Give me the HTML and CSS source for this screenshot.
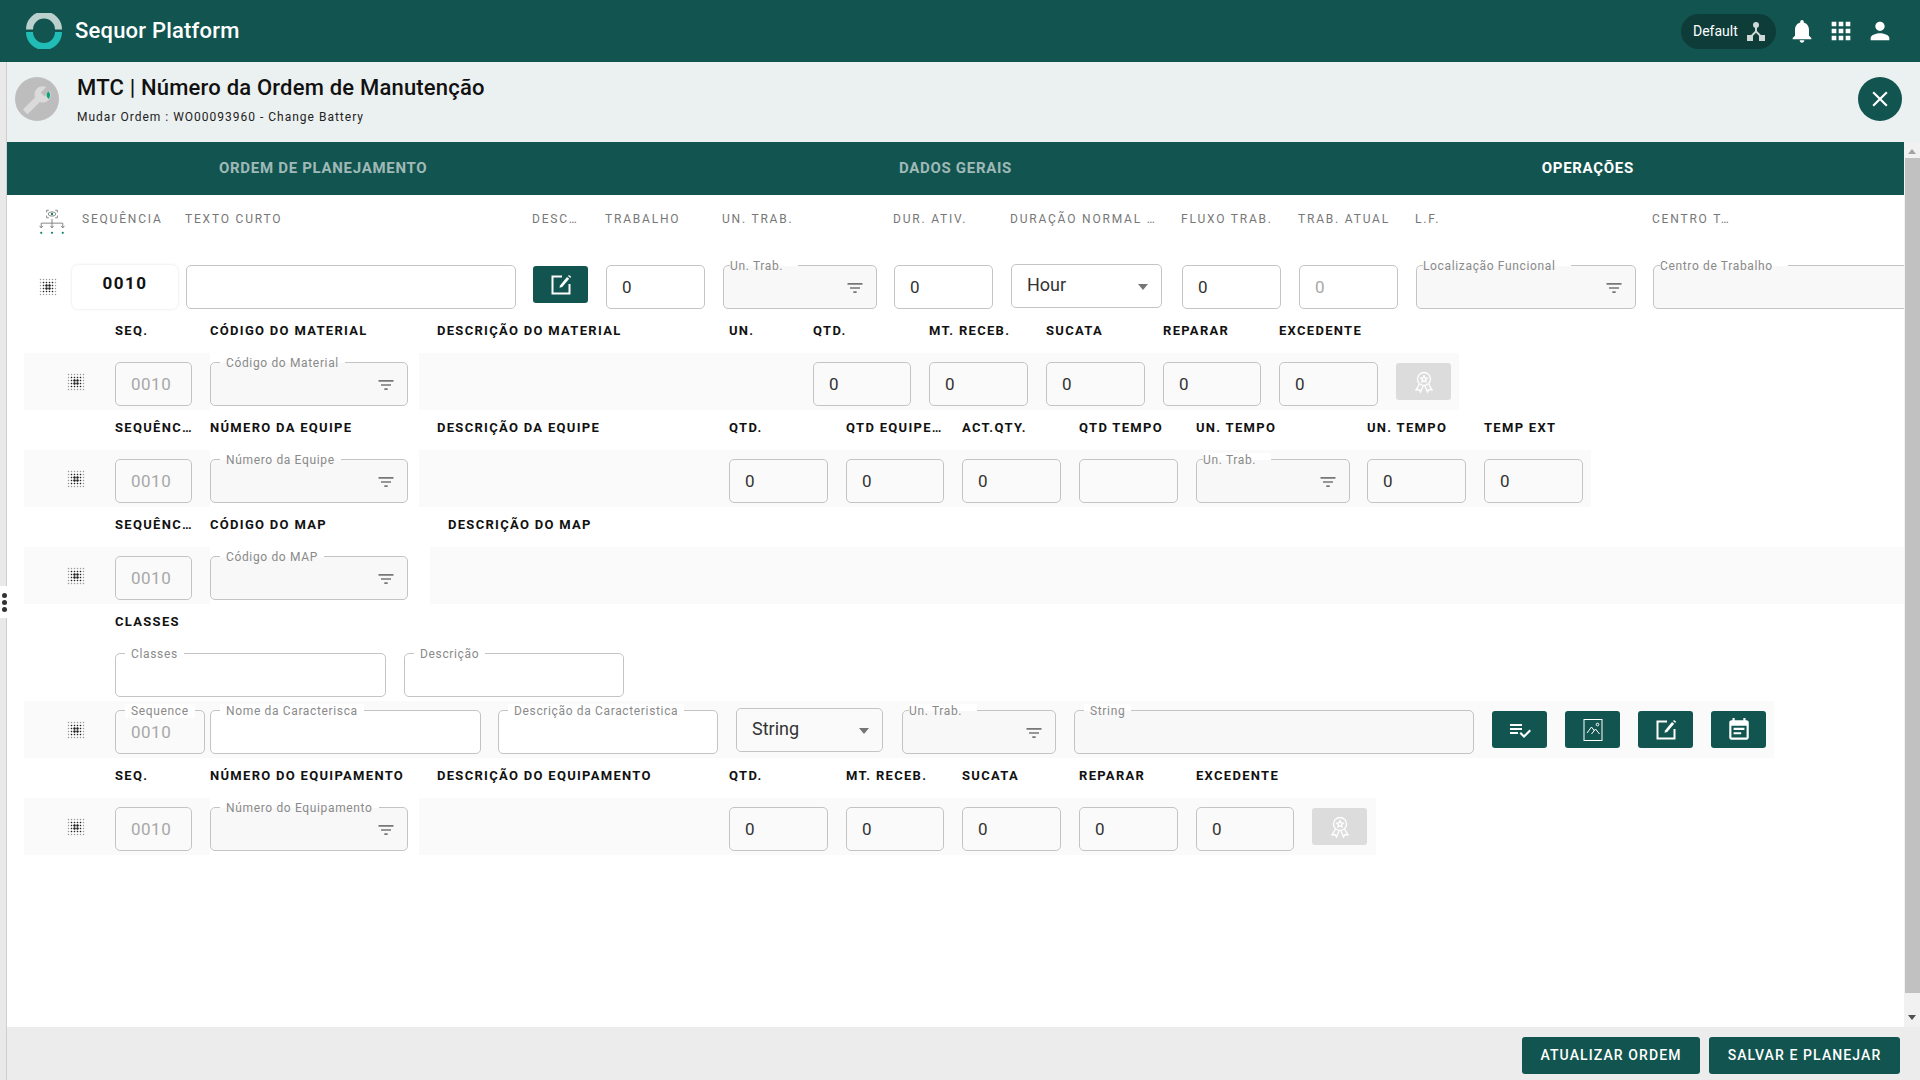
FILE: index.html
```html
<!DOCTYPE html>
<html lang="pt-BR">
<head>
    <meta charset="UTF-8">
    <meta name="viewport" content="width=device-width, initial-scale=1.0">
    <title>Sequor Platform</title>
    <link rel="stylesheet" href="styles.css">
</head>
<body>
    <svg class="sprites" width="0" height="0">
        <defs>
            <pattern id="dot-pattern" width="3" height="3" patternUnits="userSpaceOnUse"><circle cx="1.5" cy="1.5" r="0.75" fill="currentColor"/></pattern>
            <pattern id="dot-pattern-big" width="3" height="3" patternUnits="userSpaceOnUse"><circle cx="1.5" cy="1.5" r="1.200" fill="currentColor"/></pattern>
            <symbol id="i-filter" viewBox="0 0 24 24"><path d="M10 18h4v-2h-4v2zM3 6v2h18V6H3zm3 7h12v-2H6v2z"/></symbol>
            <symbol id="i-drag" viewBox="0 0 18 18">
                <rect width="18" height="18" fill="url(#dot-pattern)" opacity=".45"/>
                <rect x="3" y="3" width="12" height="12" fill="url(#dot-pattern)"/>
                <rect x="6" y="6" width="6" height="6" fill="url(#dot-pattern-big)"/>
            </symbol>
            <symbol id="i-edit" viewBox="0 0 24 24">
                <path d="M13 3.500H3.500v17h17V11" fill="none" stroke="currentColor" stroke-width="2"/>
                <path d="M11 12.500l7-8.500 2.200 1.800-7 8.200-2.700.8z" fill="currentColor"/>
                <path d="M19 3l1-1 2.200 1.800-1 1.200z" fill="currentColor"/>
            </symbol>
            <symbol id="i-award" viewBox="0 0 24 24" fill="none" stroke="currentColor" stroke-width="1.300">
                <circle cx="12" cy="9" r="6.500"/>
                <path d="M12 5.800l1 2.100 2.200.3-1.600 1.500.4 2.200-2-1.100-2 1.100.4-2.200-1.600-1.500 2.200-.3z"/>
                <path d="M7.500 14l-3.500 6 3-.5 1.500 2.500 2.500-6M16.500 14l3.500 6-3-.5-1.500 2.500-2.500-6"/>
            </symbol>
        </defs>
    </svg>

    <header class="topbar">
        <svg class="logo" width="36" height="36" viewBox="0 0 36 36" fill="none" stroke-width="7">
            <path d="M3.500 16.500A14.500 14.500 0 0 1 32.500 16.500" stroke="#b9d0cd"/>
            <path d="M3.500 19A14.500 14.500 0 0 0 32.500 19" stroke="#20bdb7"/>
        </svg>
        <span class="brand">Sequor Platform</span>
        <div class="topbar-right">
            <div class="env-pill">
                <span>Default</span>
                <svg width="20" height="20" viewBox="0 0 20 20" fill="#cfd8d7">
                    <circle cx="10" cy="4" r="3"/>
                    <path d="M9 5h2v5l5 5-1.400 1.400L10 11.800l-4.600 4.600L4 15l5-5z"/>
                    <rect x="1" y="14" width="6" height="6"/>
                    <rect x="13" y="14" width="6" height="6"/>
                </svg>
            </div>
            <svg class="top-icon" viewBox="0 0 24 24"><path d="M12 22c1.100 0 2-.9 2-2h-4c0 1.100.9 2 2 2zm6-6v-5c0-3.070-1.640-5.640-4.500-6.320V4c0-.83-.67-1.500-1.500-1.500s-1.500.67-1.500 1.500v.68C7.630 5.360 6 7.920 6 11v5l-2 2v1h16v-1l-2-2z"/></svg>
            <svg class="top-icon" viewBox="0 0 24 24"><path d="M4 8h4V4H4v4zm6 12h4v-4h-4v4zm-6 0h4v-4H4v4zm0-6h4v-4H4v4zm6 0h4v-4h-4v4zm6-10v4h4V4h-4zm-6 4h4V4h-4v4zm6 6h4v-4h-4v4zm0 6h4v-4h-4v4z"/></svg>
            <svg class="top-icon" viewBox="0 0 24 24"><path d="M12 12c2.210 0 4-1.790 4-4s-1.790-4-4-4-4 1.790-4 4 1.790 4 4 4zm0 2c-2.670 0-8 1.340-8 4v2h16v-2c0-2.660-5.330-4-8-4z"/></svg>
        </div>
    </header>

    <div class="shell">
        <aside class="rail">
            <div class="rail-handle"><i></i><i></i><i></i></div>
        </aside>

        <main class="page">
            <section class="titlebar">
                <div class="avatar">
                    <svg width="44" height="44" viewBox="0 0 44 44">
                        <path transform="translate(37 8) scale(-1.250 1.250)" fill="#dadada" d="M22.700 19l-9.100-9.100c.9-2.300.4-5-1.500-6.900-2-2-5-2.400-7.400-1.300L9 6 6 9 1.600 4.700C.4 7.100.9 10.100 2.900 12.100c1.900 1.900 4.600 2.400 6.900 1.500l9.100 9.100c.4.4 1 .4 1.400 0l2.300-2.300c.5-.4.500-1.100.1-1.400z"/>
                        <path d="M33.500 14.500c2 1.800 2.200 4.500.3 7.500-2.300-1.500-3.400-4.500-.3-7.500z" fill="#10a37f"/>
                    </svg>
                </div>
                <div class="title-text">
                    <h1>MTC | Número da Ordem de Manutenção</h1>
                    <p>Mudar Ordem : WO00093960 - Change Battery</p>
                </div>
                <button class="close-btn">
                    <svg width="26" height="26" viewBox="0 0 24 24" fill="#fff"><path d="M19 6.410L17.590 5 12 10.590 6.410 5 5 6.410 10.590 12 5 17.590 6.410 19 12 13.410 17.590 19 19 17.590 13.410 12z"/></svg>
                </button>
            </section>

            <div class="work">
                <div class="panel">
                    <nav class="tabs">
                        <div class="tab">ORDEM DE PLANEJAMENTO</div>
                        <div class="tab">DADOS GERAIS</div>
                        <div class="tab active">OPERAÇÕES</div>
                    </nav>

                    <!-- operacao -->
                    <div class="block ops">
                        <div class="op-head op-tree">
                            <svg width="28" height="28" viewBox="0 0 26 26" fill="none" stroke="#777" stroke-width=".8">
                                <path d="M8 5V3h2M16 3h2v2M18 8v2h-2M10 10H8V8"/>
                                <ellipse cx="13" cy="6.500" rx="3.500" ry="2"/>
                                <circle cx="13" cy="6.500" r="1.100" fill="#14806f" stroke="none"/>
                                <path d="M13 11v8M3 19v-4h20v4M1.500 17.500L3 19.500l1.500-2M11.500 17.500l1.500 2 1.500-2M21.500 17.500l1.500 2 1.500-2"/>
                                <circle cx="3" cy="24" r="1" fill="#14806f" stroke="none"/>
                                <circle cx="13" cy="24" r="1" fill="#14806f" stroke="none"/>
                                <circle cx="23" cy="24" r="1" fill="#14806f" stroke="none"/>
                            </svg>
                        </div>
                        <div class="op-head">SEQUÊNCIA</div>
                        <div class="op-head flush">TEXTO CURTO</div>
                        <div class="op-head flush">DESC…</div>
                        <div class="op-head flush">TRABALHO</div>
                        <div class="op-head flush">UN. TRAB.</div>
                        <div class="op-head flush">DUR. ATIV.</div>
                        <div class="op-head flush">DURAÇÃO NORMAL …</div>
                        <div class="op-head flush">FLUXO TRAB.</div>
                        <div class="op-head flush">TRAB. ATUAL</div>
                        <div class="op-head flush">L.F.</div>
                        <div class="op-head flush">CENTRO T…</div>

                        <div class="op-cell"><svg class="drag drag-op"><use href="#i-drag"/></svg></div>
                        <div class="op-cell"><div class="seq-badge">0010</div></div>
                        <div class="op-cell"><div class="field w330"></div></div>
                        <div class="op-cell"><button class="act"><svg class="act-icon"><use href="#i-edit"/></svg></button></div>
                        <div class="op-cell"><div class="field">0</div></div>
                        <div class="op-cell"><div class="field tinted"><span class="legend tight">Un. Trab.</span><svg class="filter"><use href="#i-filter"/></svg></div></div>
                        <div class="op-cell"><div class="field">0</div></div>
                        <div class="op-cell"><div class="field select w151">Hour</div></div>
                        <div class="op-cell"><div class="field">0</div></div>
                        <div class="op-cell"><div class="field muted">0</div></div>
                        <div class="op-cell"><div class="field tinted"><span class="legend tight">Localização Funcional</span><svg class="filter"><use href="#i-filter"/></svg></div></div>
                        <div class="op-cell"><div class="field tinted over"><span class="legend tight">Centro de Trabalho</span></div></div>
                    </div>

                    <!-- material -->
                    <div class="block material">
                        <div class="head"></div><div class="head">SEQ.</div><div class="head">CÓDIGO DO MATERIAL</div><div class="head indent">DESCRIÇÃO DO MATERIAL</div>
                        <div class="head">UN.</div><div class="head">QTD.</div><div class="head">MT. RECEB.</div><div class="head">SUCATA</div><div class="head">REPARAR</div><div class="head">EXCEDENTE</div><div class="head"></div>

                        <div class="cell"><svg class="drag"><use href="#i-drag"/></svg></div>
                        <div class="cell"><div class="field muted band-bg">0010</div></div>
                        <div class="cell bare"><div class="field tinted w198"><span class="legend">Código do Material</span><svg class="filter"><use href="#i-filter"/></svg></div></div>
                        <div class="cell"></div>
                        <div class="cell"></div>
                        <div class="cell"><div class="field band-bg">0</div></div>
                        <div class="cell"><div class="field band-bg">0</div></div>
                        <div class="cell"><div class="field band-bg">0</div></div>
                        <div class="cell"><div class="field band-bg">0</div></div>
                        <div class="cell"><div class="field band-bg">0</div></div>
                        <div class="cell"><button class="act off"><svg class="act-icon"><use href="#i-award"/></svg></button></div>
                    </div>

                    <!-- equipe -->
                    <div class="block team">
                        <div class="head"></div><div class="head">SEQUÊNC…</div><div class="head">NÚMERO DA EQUIPE</div><div class="head indent">DESCRIÇÃO DA EQUIPE</div>
                        <div class="head">QTD.</div><div class="head">QTD EQUIPE…</div><div class="head">ACT.QTY.</div><div class="head">QTD TEMPO</div><div class="head">UN. TEMPO</div><div class="head">UN. TEMPO</div><div class="head">TEMP EXT</div>

                        <div class="cell"><svg class="drag"><use href="#i-drag"/></svg></div>
                        <div class="cell"><div class="field muted band-bg">0010</div></div>
                        <div class="cell bare"><div class="field tinted w198"><span class="legend">Número da Equipe</span><svg class="filter"><use href="#i-filter"/></svg></div></div>
                        <div class="cell"></div>
                        <div class="cell"><div class="field band-bg">0</div></div>
                        <div class="cell"><div class="field band-bg">0</div></div>
                        <div class="cell"><div class="field band-bg">0</div></div>
                        <div class="cell"><div class="field band-bg"></div></div>
                        <div class="cell"><div class="field tinted w154"><span class="legend tight">Un. Trab.</span><svg class="filter"><use href="#i-filter"/></svg></div></div>
                        <div class="cell"><div class="field band-bg">0</div></div>
                        <div class="cell"><div class="field band-bg w99">0</div></div>
                    </div>

                    <!-- map -->
                    <div class="block map">
                        <div class="head"></div><div class="head">SEQUÊNC…</div><div class="head">CÓDIGO DO MAP</div><div class="head indent">DESCRIÇÃO DO MAP</div>

                        <div class="cell"><svg class="drag"><use href="#i-drag"/></svg></div>
                        <div class="cell"><div class="field muted band-bg">0010</div></div>
                        <div class="cell bare"><div class="field tinted w198"><span class="legend">Código do MAP</span><svg class="filter"><use href="#i-filter"/></svg></div></div>
                        <div class="cell"></div>
                    </div>

                    <!-- classes -->
                    <div class="block classes">
                        <div class="head">CLASSES</div><div class="head"></div>
                        <div class="cell bare"><div class="field"><span class="legend">Classes</span></div></div>
                        <div class="cell bare"><div class="field"><span class="legend">Descrição</span></div></div>
                    </div>

                    <div class="block traits">
                        <div class="cell"><svg class="drag"><use href="#i-drag"/></svg></div>
                        <div class="cell"><div class="field muted band-bg w90"><span class="legend">Sequence</span>0010</div></div>
                        <div class="cell"><div class="field w271"><span class="legend">Nome da Caracterisca</span></div></div>
                        <div class="cell"><div class="field"><span class="legend">Descrição da Caracteristica</span></div></div>
                        <div class="cell"><div class="field select band-bg w147">String</div></div>
                        <div class="cell"><div class="field tinted w154"><span class="legend tight">Un. Trab.</span><svg class="filter"><use href="#i-filter"/></svg></div></div>
                        <div class="cell"><div class="field tinted"><span class="legend">String</span></div></div>
                        <div class="cell"><button class="act">
                            <svg class="act-icon" viewBox="0 0 24 24" fill="#fff"><path d="M14 10H2v2h12v-2zm0-4H2v2h12V6zM2 16h8v-2H2v2zm19.500-4.500L23 13l-6.990 7-4.510-4.500L13 14l3.010 3 5.490-5.500z"/></svg>
                        </button></div>
                        <div class="cell"><button class="act">
                            <svg class="act-icon line" viewBox="0 0 24 24">
                                <rect x="3" y="1.500" width="18" height="21"/>
                                <path d="M6 15l4.500-6 3 4M10.500 16l4-5 4 5"/>
                                <circle cx="16.500" cy="6.500" r="1.300"/>
                            </svg>
                        </button></div>
                        <div class="cell"><button class="act"><svg class="act-icon"><use href="#i-edit"/></svg></button></div>
                        <div class="cell"><button class="act">
                            <svg class="act-icon big" viewBox="0 0 24 24" fill="#fff"><path d="M17 10H7v2h10v-2zm2-7h-1V1h-2v2H8V1H6v2H5c-1.110 0-1.990.9-1.990 2L3 19c0 1.100.89 2 2 2h14c1.100 0 2-.9 2-2V5c0-1.100-.9-2-2-2zm0 16H5V8h14v11zm-5-5H7v2h7v-2z"/></svg>
                        </button></div>
                    </div>

                    <!-- equipamento -->
                    <div class="block gear">
                        <div class="head"></div><div class="head">SEQ.</div><div class="head">NÚMERO DO EQUIPAMENTO</div><div class="head indent">DESCRIÇÃO DO EQUIPAMENTO</div>
                        <div class="head">QTD.</div><div class="head">MT. RECEB.</div><div class="head">SUCATA</div><div class="head">REPARAR</div><div class="head">EXCEDENTE</div><div class="head"></div>

                        <div class="cell"><svg class="drag"><use href="#i-drag"/></svg></div>
                        <div class="cell"><div class="field muted band-bg">0010</div></div>
                        <div class="cell bare"><div class="field tinted w198"><span class="legend">Número do Equipamento</span><svg class="filter"><use href="#i-filter"/></svg></div></div>
                        <div class="cell"></div>
                        <div class="cell"><div class="field band-bg">0</div></div>
                        <div class="cell"><div class="field band-bg">0</div></div>
                        <div class="cell"><div class="field band-bg">0</div></div>
                        <div class="cell"><div class="field band-bg">0</div></div>
                        <div class="cell"><div class="field band-bg">0</div></div>
                        <div class="cell"><button class="act off"><svg class="act-icon"><use href="#i-award"/></svg></button></div>
                    </div>
                </div>

                <div class="scrollbar">
                    <span class="arrow up"></span>
                    <span class="thumb"></span>
                    <span class="arrow down"></span>
                </div>
            </div>

            <footer class="actions">
                <button class="btn w178">ATUALIZAR ORDEM</button>
                <button class="btn w191">SALVAR E PLANEJAR</button>
            </footer>
        </main>
    </div>
</body>
</html>
```

FILE: styles.css
```css
* {
    box-sizing: border-box;
}
body {
    margin: 0;
    height: 1080px;
    overflow: hidden;
    font-family: Roboto, "Liberation Sans", sans-serif;
    background: #fff;
    color: #222;
}
button {
    font-family: inherit;
    border: none;
    cursor: pointer;
}
.sprites {
    position: absolute;
}

/* topo */
.topbar {
    height: 62px;
    background: #12544f;
    display: flex;
    align-items: center;
    padding-left: 26px;
    color: #fff;
}
.brand {
    margin: -2px 0 0 13px;
    font-size: 22px;
    font-weight: 500;
    letter-spacing: .2px;
}
.topbar-right {
    margin-left: auto;
    display: flex;
    align-items: center;
    padding-right: 26px;
}
.env-pill {
    width: 95px;
    height: 35px;
    border-radius: 18px;
    background: #0d3c39;
    display: flex;
    align-items: center;
    gap: 8px;
    padding-left: 12px;
    font-size: 14px;
    margin-right: 12px;
}
.top-icon {
    width: 28px;
    height: 28px;
    fill: #fff;
    margin-left: 11px;
}
.env-pill + .top-icon {
    margin-left: 0;
}

.shell {
    display: flex;
    height: 1018px;
}
.rail {
    width: 7px;
    background: #e9e9e9;
    border-right: 1px solid #cfcfcf;
    position: relative;
}
.rail-handle {
    position: absolute;
    top: 524px;
    left: 0;
    width: 8px;
    height: 32px;
    background: #fff;
    display: flex;
    flex-direction: column;
    justify-content: center;
    gap: 2px;
    padding-left: 2px;
}
.rail-handle i {
    width: 5px;
    height: 5px;
    border-radius: 50%;
    background: #333;
}
.page {
    flex: 1;
    min-width: 0;
    display: flex;
    flex-direction: column;
}

/* titulo */
.titlebar {
    height: 80px;
    background: #ebf0f0;
    display: flex;
    align-items: flex-start;
    padding: 15px 18px 0 8px;
}
.avatar {
    width: 44px;
    height: 44px;
    border-radius: 50%;
    background: #bdbdbd;
    overflow: hidden;
}
.title-text {
    margin-left: 18px;
}
.title-text h1 {
    margin: -4px 0 0;
    font-size: 22px;
    line-height: 30px;
    font-weight: 500;
    letter-spacing: .2px;
    color: #111;
}
.title-text p {
    margin: 6px 0 0;
    font-size: 12px;
    line-height: 16px;
    letter-spacing: 1px;
}
.close-btn {
    margin-left: auto;
    width: 44px;
    height: 44px;
    border-radius: 50%;
    background: #12544f;
    display: flex;
    align-items: center;
    justify-content: center;
    padding: 0;
}

/* area de trabalho */
.work {
    height: 885px;
    display: flex;
}
.panel {
    flex: 1;
    min-width: 0;
    overflow: hidden;
}
.tabs {
    height: 53px;
    background: #12544f;
    display: flex;
}
.tab {
    flex: 1;
    text-align: center;
    line-height: 53px;
    font-size: 15px;
    font-weight: 700;
    letter-spacing: .7px;
    color: rgba(255, 255, 255, .6);
}
.tab.active {
    color: #fff;
}

.block {
    display: grid;
    grid-template-rows: 40px 57px;
    margin-left: 17px;
}
.ops {
    margin-left: 0;
    grid-template-rows: 70px 48px;
    grid-template-columns: 65px 114px 347px 73px 117px 171px 117px 171px 117px 117px 237px 250px;
}
.material {
    grid-template-columns: 91px 95px 209px 310px 84px 116px 117px 117px 116px 117px 63px;
}
.team {
    grid-template-columns: 91px 95px 209px 310px 117px 116px 117px 117px 171px 117px 107px;
}
.map {
    grid-template-columns: 91px 95px 220px 1474px;
}
.classes {
    margin-left: 108px;
    grid-template-columns: 289px 238px;
}
.traits {
    grid-template-rows: 57px;
    grid-template-columns: 91px 95px 288px 238px 166px 172px 418px 73px 73px 73px 63px;
}
.gear {
    grid-template-columns: 91px 95px 209px 310px 117px 116px 117px 117px 116px 64px;
}

.op-head {
    padding: 17px 0 0 10px;
    font-size: 12px;
    line-height: 14px;
    letter-spacing: 1.8px;
    color: #777;
    white-space: nowrap;
}
.op-head.flush {
    padding-left: 0;
    margin-left: -1px;
}
.op-tree {
    padding: 12px 0 0 31px;
}
.head {
    padding-top: 11px;
    font-size: 13px;
    line-height: 14px;
    font-weight: 700;
    letter-spacing: 1.3px;
    color: #111;
    white-space: nowrap;
}
.head.indent {
    padding-left: 18px;
}
.cell {
    background: #fafafa;
    padding-top: 9px;
    display: flex;
    align-items: flex-start;
}
.cell.bare {
    background: #fff;
}

/* campos */
.field {
    position: relative;
    flex: none;
    width: calc(100% - 18px);
    height: 44px;
    border: 1px solid #c4c4c4;
    border-radius: 5px;
    background: #fff;
    padding-left: 15px;
    font-size: 17px;
    line-height: 42px;
    color: #333;
}
.field.tinted {
    background: #f8f8f8;
}
.op-cell .field.tinted {
    width: calc(100% - 17px);
}
.field.band-bg {
    background: #fafafa;
}
.field.muted {
    color: #a8a8a8;
    letter-spacing: .5px;
}
.op-cell .field.over {
    width: calc(100% + 20px);
}
.field.select {
    margin-top: -2px;
    background: #fff;
    font-size: 18px;
    line-height: 40px;
}
.field.select.band-bg {
    background: #fafafa;
}
.field.select::after {
    content: "";
    position: absolute;
    right: 13px;
    top: 19px;
    border-left: 5.5px solid transparent;
    border-right: 5.5px solid transparent;
    border-top: 6px solid #757575;
}
.w90 {
    width: 90px;
}
.w99 {
    width: 99px;
}
.w147 {
    width: 147px;
}
.w151 {
    width: 151px;
}
.w154 {
    width: 154px;
}
.w198 {
    width: 198px;
}
.w271 {
    width: 271px;
}
.w330 {
    width: 330px;
}
.legend {
    position: absolute;
    top: -7px;
    left: 9px;
    padding: 0 6px;
    background: #fff;
    font-size: 12px;
    line-height: 14px;
    letter-spacing: .65px;
    color: #8a8a8a;
    white-space: nowrap;
}
.field.tinted .legend {
    background: linear-gradient(#fff 50%, #f8f8f8 50%);
}
.legend.tight {
    left: 6px;
    padding: 0 15px 0 0;
}
.filter {
    position: absolute;
    right: 11px;
    top: 12px;
    width: 20px;
    height: 20px;
    fill: #777;
}
.drag {
    width: 18px;
    height: 18px;
    color: #12544f;
    margin: 11px 0 0 43px;
}
.drag-op {
    color: #aaa;
    margin: 0 0 0 32px;
}

/* linha da operacao */
.op-cell {
    display: flex;
    align-items: center;
    height: 44px;
}
.seq-badge {
    width: 106px;
    height: 44px;
    border-radius: 6px;
    background: #fff;
    box-shadow: 0 0 3px rgba(0, 0, 0, .12);
    text-align: center;
    font-size: 17px;
    line-height: 36px;
    font-weight: 700;
    letter-spacing: 1.5px;
    color: #111;
}
.act {
    width: 55px;
    height: 37px;
    border-radius: 3px;
    background: #12544f;
    color: #fff;
    padding: 0;
    display: flex;
    align-items: center;
    justify-content: center;
}
.act.off {
    background: #dcdcdc;
}
.act-icon {
    width: 24px;
    height: 24px;
    fill: #fff;
}
.act-icon.big {
    width: 26px;
    height: 26px;
}
.act-icon.line {
    fill: none;
    stroke: #fff;
    stroke-width: 1;
}
.cell .act {
    margin-top: 1px;
}
.op-cell .act {
    margin-top: -5px;
}

/* barra de rolagem */
.scrollbar {
    width: 16px;
    background: #f1f1f1;
    position: relative;
    display: flex;
    flex-direction: column;
    align-items: center;
}
.thumb {
    width: 15px;
    height: 835px;
    margin-top: 16px;
    background: #c1c1c1;
}
.arrow {
    position: absolute;
    border-left: 4px solid transparent;
    border-right: 4px solid transparent;
}
.arrow.up {
    top: 7px;
    border-bottom: 5px solid #a3a3a3;
}
.arrow.down {
    bottom: 7px;
    border-top: 5px solid #505050;
}

/* rodape */
.actions {
    height: 53px;
    background: #ececec;
    display: flex;
    justify-content: flex-end;
    gap: 9px;
    padding: 10px 20px 0 0;
}
.btn {
    height: 37px;
    border-radius: 3px;
    background: #12544f;
    color: #fff;
    font-size: 14px;
    font-weight: 500;
    letter-spacing: 1.1px;
    padding: 0 0 2px;
}
.w178 {
    width: 178px;
}
.w191 {
    width: 191px;
}
```
